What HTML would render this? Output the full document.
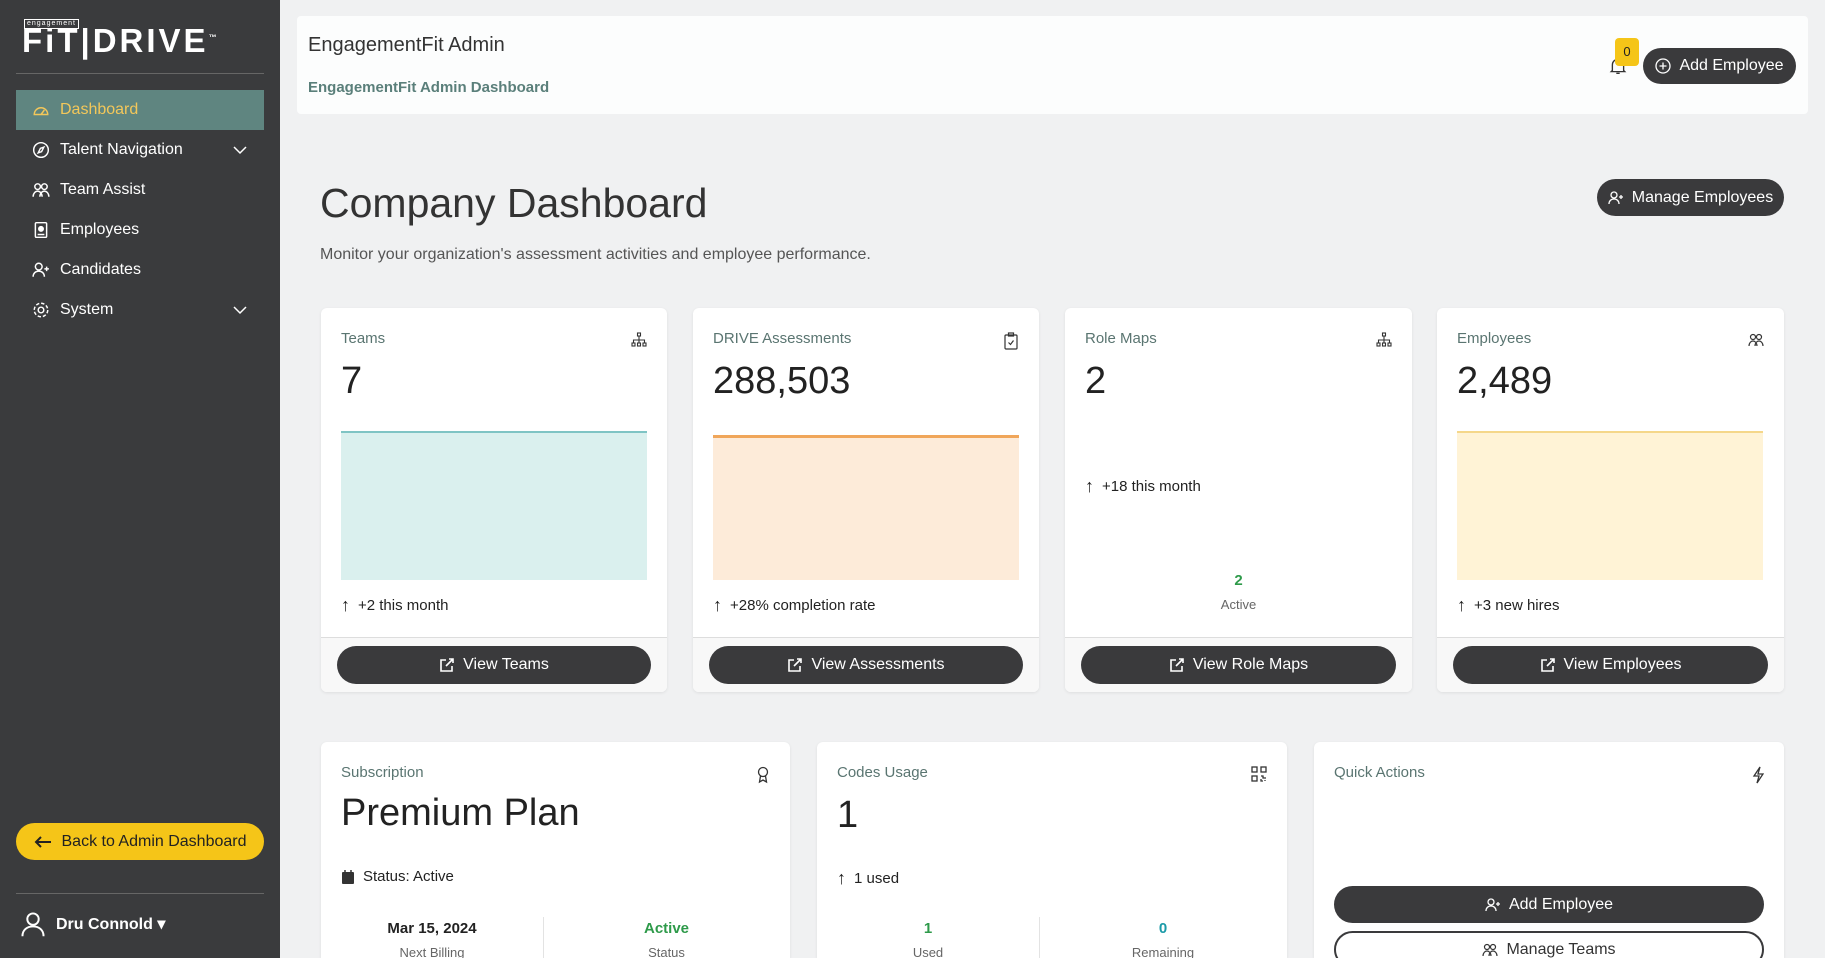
<!DOCTYPE html>
<html><head><meta charset="utf-8"><style>
*{box-sizing:border-box;margin:0;padding:0}
html{width:1825px;height:958px;overflow:hidden}
body{width:1825px;height:958px;overflow:hidden;background:#f0f1f2;font-family:"Liberation Sans",sans-serif;position:relative;color:#222}
.sb{position:absolute;left:0;top:0;width:280px;height:958px;background:#3a3b3d;color:#fff}
.logo{position:absolute;left:22px;top:22px;font-weight:900;font-size:33px;letter-spacing:3px;color:#fff}
.logo small{position:absolute;left:2px;top:-3px;font-size:7px;font-weight:400;border:1px solid #fff;padding:0 2px;letter-spacing:1px;line-height:8px}
.hr{position:absolute;left:16px;width:248px;height:1px;background:#666}
.nav{position:absolute;left:16px;width:248px;height:40px;display:flex;align-items:center;padding-left:16px;font-size:16px;gap:10px}
.nav.act{background:#5f8580;color:#f3c75a}
.nav .chev{position:absolute;right:16px;top:12px}
.back{position:absolute;left:16px;top:823px;width:248px;height:37px;border-radius:19px;background:#f5c518;color:#222;font-size:16px;display:flex;align-items:center;justify-content:center;gap:10px}
.user{position:absolute;left:20px;top:910px;display:flex;align-items:center;gap:10px;font-weight:bold;font-size:16px}
.hdr{position:absolute;left:297px;top:16px;width:1511px;height:98px;background:#fcfdfd;border-radius:4px}
.btn{position:absolute;background:#3a3a3c;color:#fff;border-radius:20px;display:flex;align-items:center;justify-content:center;gap:8px;font-size:16px}
.card{position:absolute;background:#fff;border-radius:6px;box-shadow:0 1px 3px rgba(0,0,0,.08);overflow:hidden}
.lbl{position:absolute;left:20px;top:22px;font-size:15px;color:#5a7571}
.ic{position:absolute;right:20px;top:24px}
.val{position:absolute;left:20px;top:52px;font-size:38px;color:#222}
.chart{position:absolute;left:20px;top:123px;width:306px;height:149px}
.foot{position:absolute;left:20px;top:287px;font-size:15px;display:flex;align-items:center;gap:8px}
.ff{position:absolute;left:0;top:329px;width:100%;height:60px;background:#f8f8f8;border-top:1px solid #ddd}
.ff .btn{left:16px;right:16px;top:8px;height:38px}
.stat{position:absolute;text-align:center}
</style></head><body>
<svg width="0" height="0" style="position:absolute"><defs>
<symbol id="ext" viewBox="0 0 16 16"><path d="M13 9v5H2V3h5M10 2h4v4M14 2L7 9" fill="none" stroke="#fff" stroke-width="1.6"/></symbol>
<symbol id="org" viewBox="0 0 16 16"><g fill="none" stroke="#333" stroke-width="1.1"><rect x="6.5" y="1" width="3" height="3"/><rect x="1" y="11" width="3" height="3"/><rect x="6.5" y="11" width="3" height="3"/><rect x="12" y="11" width="3" height="3"/><path d="M8 4v7M2.5 11V8h11v3"/></g></symbol>
<symbol id="ppl" viewBox="0 0 16 16"><g fill="none" stroke="#333" stroke-width="1.2"><circle cx="5" cy="5" r="2.5"/><circle cx="11" cy="5" r="2.5"/><path d="M1 14c0-3 2-5 4-5s4 2 4 5M7 14c0-3 2-5 4-5s4 2 4 5"/></g></symbol>
<symbol id="padd" viewBox="0 0 16 16"><g fill="none" stroke="#fff" stroke-width="1.3"><circle cx="6" cy="5" r="3"/><path d="M1 14c0-3 2-5 5-5s5 2 5 5M13 5v4M11 7h4"/></g></symbol>
</defs></svg>
<div class="sb">
 <div class="logo"><small>engagement</small>FiT|DRIVE<sup style="font-size:8px">™</sup></div>
 <div class="hr" style="top:73px"></div>
 <div class="nav act" style="top:90px"><svg width="18" height="18" viewBox="0 0 16 16" fill="none" stroke="#f3c75a" stroke-width="1.3"><path d="M2 12a6 6 0 1 1 12 0z"/><path d="M8 12l3-4"/></svg>Dashboard</div>
 <div class="nav" style="top:130px"><svg width="18" height="18" viewBox="0 0 16 16" fill="none" stroke="#fff" stroke-width="1.3"><circle cx="8" cy="8" r="6.5"/><path d="M10.5 5.5l-2 4-3 1 2-4z"/></svg>Talent Navigation<svg class="chev" width="16" height="16" viewBox="0 0 16 16" fill="none" stroke="#fff" stroke-width="1.5"><path d="M2 5l6 6 6-6"/></svg></div>
 <div class="nav" style="top:170px"><svg width="18" height="18" viewBox="0 0 16 16" fill="none" stroke="#fff" stroke-width="1.3"><circle cx="5" cy="5" r="2.5"/><circle cx="11" cy="5" r="2.5"/><path d="M1 14c0-3 2-5 4-5s4 2 4 5M7 14c0-3 2-5 4-5s4 2 4 5"/></svg>Team Assist</div>
 <div class="nav" style="top:210px"><svg width="18" height="18" viewBox="0 0 16 16" fill="none" stroke="#fff" stroke-width="1.3"><rect x="3" y="1.5" width="10" height="13" rx="1"/><circle cx="8" cy="7" r="2" fill="#fff"/><path d="M5 12h6"/></svg>Employees</div>
 <div class="nav" style="top:250px"><svg width="18" height="18"><use href="#padd"/></svg>Candidates</div>
 <div class="nav" style="top:290px"><svg width="18" height="18" viewBox="0 0 16 16" fill="none" stroke="#fff" stroke-width="1.3"><circle cx="8" cy="8" r="2.5"/><circle cx="8" cy="8" r="6" stroke-dasharray="3 1.7"/></svg>System<svg class="chev" width="16" height="16" viewBox="0 0 16 16" fill="none" stroke="#fff" stroke-width="1.5"><path d="M2 5l6 6 6-6"/></svg></div>
 <div class="back"><svg width="18" height="14" viewBox="0 0 18 14" fill="none" stroke="#222" stroke-width="2"><path d="M17 7H2M7 2L2 7l5 5"/></svg>Back to Admin Dashboard</div>
 <div class="hr" style="top:893px"></div>
 <div class="user"><svg width="26" height="28" viewBox="0 0 16 16" fill="none" stroke="#fff" stroke-width="1.2"><circle cx="8" cy="5" r="3.5"/><path d="M1.5 15.5c0-4 3-6 6.5-6s6.5 2 6.5 6"/></svg>Dru Connold ▾</div>
</div>
<div class="hdr">
 <div style="position:absolute;left:11px;top:18px;font-size:20px;color:#333">EngagementFit Admin</div>
 <div style="position:absolute;left:11px;top:63px;font-size:15px;font-weight:bold;color:#5a7f7a">EngagementFit Admin Dashboard</div>
 <svg style="position:absolute;left:1312px;top:40px" width="18" height="20" viewBox="0 0 16 16" fill="none" stroke="#333" stroke-width="1.2"><path d="M3 12V7a5 5 0 0 1 10 0v5l1 1H2zM6.5 14.5h3"/></svg>
 <div style="position:absolute;left:1318px;top:22px;width:24px;height:28px;background:#f5c518;border-radius:4px;font-size:13px;text-align:center;line-height:28px">0</div>
 <div class="btn" style="left:1346px;top:32px;width:153px;height:36px"><svg width="16" height="16" viewBox="0 0 16 16" fill="none" stroke="#fff" stroke-width="1.3"><circle cx="8" cy="8" r="7"/><path d="M8 4.5v7M4.5 8h7"/></svg>Add Employee</div>
</div>
<div style="position:absolute;left:320px;top:180px;font-size:41px;color:#333">Company Dashboard</div>
<div style="position:absolute;left:320px;top:246px;font-size:16px;color:#555">Monitor your organization's assessment activities and employee performance.</div>
<div class="btn" style="left:1597px;top:179px;width:187px;height:37px"><svg width="16" height="16"><use href="#padd"/></svg>Manage Employees</div>

<div class="card" style="left:321px;top:308px;width:346px;height:384px">
 <div class="lbl">Teams</div><svg class="ic" width="16" height="16"><use href="#org"/></svg><div class="val">7</div>
 <div class="chart" style="background:#daf0ee;border-top:2px solid #7fc4c4"></div>
 <div class="foot"><b style="font-size:18px">↑</b>+2 this month</div>
 <div class="ff"><div class="btn"><svg width="16" height="16"><use href="#ext"/></svg>View Teams</div></div>
</div>
<div class="card" style="left:693px;top:308px;width:346px;height:384px">
 <div class="lbl">DRIVE Assessments</div><svg class="ic" width="16" height="18" viewBox="0 0 16 18" fill="none" stroke="#333" stroke-width="1.2"><rect x="2" y="3" width="12" height="14" rx="1"/><rect x="5.5" y="1" width="5" height="3"/><path d="M5.5 10.5l2 2 3-4"/></svg><div class="val">288,503</div>
 <div class="chart" style="top:127px;height:145px;background:#fdebd9;border-top:3px solid #f0a65a"></div>
 <div class="foot"><b style="font-size:18px">↑</b>+28% completion rate</div>
 <div class="ff"><div class="btn"><svg width="16" height="16"><use href="#ext"/></svg>View Assessments</div></div>
</div>
<div class="card" style="left:1065px;top:308px;width:347px;height:384px">
 <div class="lbl">Role Maps</div><svg class="ic" width="16" height="16"><use href="#org"/></svg><div class="val">2</div>
 <div class="foot" style="top:168px"><b style="font-size:18px">↑</b>+18 this month</div>
 <div style="position:absolute;left:0;width:100%;top:264px;text-align:center;color:#2e9a4a;font-weight:bold;font-size:15px">2</div>
 <div style="position:absolute;left:0;width:100%;top:289px;text-align:center;color:#666;font-size:13px">Active</div>
 <div class="ff"><div class="btn"><svg width="16" height="16"><use href="#ext"/></svg>View Role Maps</div></div>
</div>
<div class="card" style="left:1437px;top:308px;width:347px;height:384px">
 <div class="lbl">Employees</div><svg class="ic" width="16" height="16"><use href="#ppl"/></svg><div class="val">2,489</div>
 <div class="chart" style="background:#fff3d6;border-top:2px solid #f5d78a"></div>
 <div class="foot"><b style="font-size:18px">↑</b>+3 new hires</div>
 <div class="ff"><div class="btn"><svg width="16" height="16"><use href="#ext"/></svg>View Employees</div></div>
</div>

<div class="card" style="left:321px;top:742px;width:469px;height:216px;border-radius:6px 6px 0 0">
 <div class="lbl">Subscription</div><svg class="ic" width="14" height="18" viewBox="0 0 14 18" fill="none" stroke="#333" stroke-width="1.3"><circle cx="7" cy="6" r="4.5"/><path d="M4.5 10l-1 6 3.5-2 3.5 2-1-6"/></svg>
 <div class="val" style="top:50px">Premium Plan</div>
 <div class="foot" style="top:126px"><svg width="14" height="15" viewBox="0 0 14 15"><rect x="1" y="3" width="12" height="12" rx="1" fill="#333"/><path d="M4 1v3M10 1v3" stroke="#333" stroke-width="1.5"/></svg>Status: Active</div>
 <div style="position:absolute;left:222px;top:175px;width:1px;height:60px;background:#e3e3e3"></div>
 <div class="stat" style="left:0;top:178px;width:222px;font-weight:bold;font-size:15px">Mar 15, 2024</div>
 <div class="stat" style="left:0;top:203px;width:222px;font-size:13px;color:#666">Next Billing</div>
 <div class="stat" style="left:222px;top:178px;width:247px;font-weight:bold;font-size:15px;color:#2e9a4a">Active</div>
 <div class="stat" style="left:222px;top:203px;width:247px;font-size:13px;color:#666">Status</div>
</div>
<div class="card" style="left:817px;top:742px;width:470px;height:216px;border-radius:6px 6px 0 0">
 <div class="lbl">Codes Usage</div><svg class="ic" width="16" height="16" viewBox="0 0 16 16" fill="none" stroke="#333" stroke-width="1.3"><rect x="1" y="1" width="5" height="5"/><rect x="10" y="1" width="5" height="5"/><rect x="1" y="10" width="5" height="5"/><path d="M10 10h2v2h3M10 13v2h2M14 14v1"/></svg>
 <div class="val">1</div>
 <div class="foot" style="top:126px"><b style="font-size:18px">↑</b>1 used</div>
 <div style="position:absolute;left:222px;top:175px;width:1px;height:60px;background:#e3e3e3"></div>
 <div class="stat" style="left:0;top:178px;width:222px;font-weight:bold;font-size:15px;color:#2e9a4a">1</div>
 <div class="stat" style="left:0;top:203px;width:222px;font-size:13px;color:#666">Used</div>
 <div class="stat" style="left:222px;top:178px;width:248px;font-weight:bold;font-size:15px;color:#1a9aa8">0</div>
 <div class="stat" style="left:222px;top:203px;width:248px;font-size:13px;color:#666">Remaining</div>
</div>
<div class="card" style="left:1314px;top:742px;width:470px;height:216px;border-radius:6px 6px 0 0">
 <div class="lbl">Quick Actions</div><svg class="ic" width="12" height="18" viewBox="0 0 12 18" fill="none" stroke="#333" stroke-width="1.3"><path d="M8 1L2 10h5l-2 7 6-9H6z"/></svg>
 <div class="btn" style="left:20px;right:20px;top:144px;height:37px"><svg width="16" height="16"><use href="#padd"/></svg>Add Employee</div>
 <div class="btn" style="left:20px;right:20px;top:189px;height:37px;background:#fff;color:#333;border:2px solid #3a3a3c"><svg width="16" height="16"><use href="#ppl"/></svg>Manage Teams</div>
</div>
</body></html>
